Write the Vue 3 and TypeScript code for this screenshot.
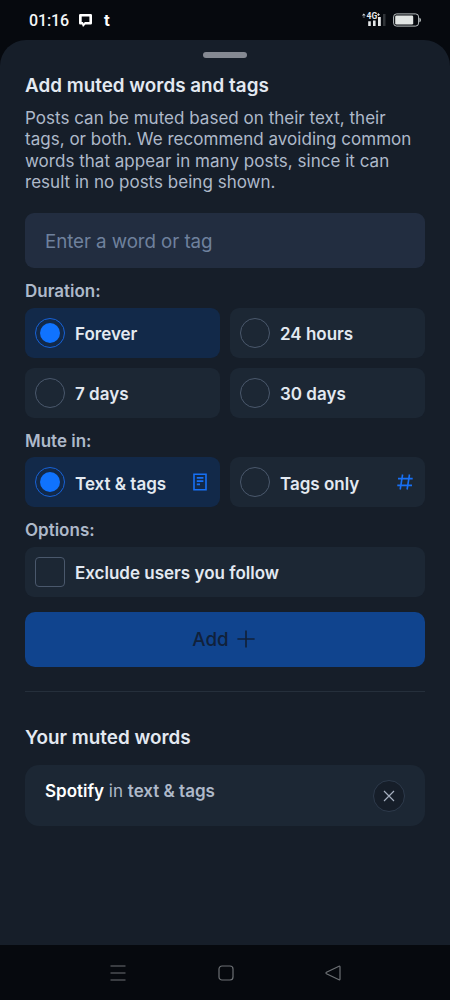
<script setup lang="ts">
import { ref } from 'vue'

interface Choice {
  id: string
  label: string
  icon?: 'page' | 'hash'
}

const durations: Choice[] = [
  { id: 'forever', label: 'Forever' },
  { id: 'day', label: '24 hours' },
  { id: 'week', label: '7 days' },
  { id: 'month', label: '30 days' },
]
const targets: Choice[] = [
  { id: 'content', label: 'Text & tags', icon: 'page' },
  { id: 'tag', label: 'Tags only', icon: 'hash' },
]
const intro: string[] = [
  'Posts can be muted based on their text, their',
  'tags, or both. We recommend avoiding common',
  'words that appear in many posts, since it can',
  'result in no posts being shown.',
]

const duration = ref('forever')
const target = ref('content')
const excludeFollowing = ref(false)
const word = ref('')
</script>

<template>
  <div class="screen">
    <header class="status">
      <span class="clock">01:16</span>
      <svg class="chat" width="13" height="13" viewBox="0 0 13 13">
        <path fill="#fff" fill-rule="evenodd" d="M1.3 0H11.7Q13 0 13 1.3V9.2Q13 10.5 11.7 10.5H6.4L4 13L3 10.5H1.3Q0 10.5 0 9.2V1.3Q0 0 1.3 0ZM2.7 2.6V8H4.2V9.4L6 8H10.4V2.6Z" />
      </svg>
      <span class="tee">t</span>
      <span class="grow"></span>
      <svg class="signal" width="28" height="16" viewBox="0 0 28 16">
        <path d="M0 3.4L1.8 1.6L3.6 3.4Z" fill="#dde1e3" />
        <path d="M.8 5H2.9" stroke="#777d82" />
        <text x="4.6" y="7.2" class="network">4G</text>
        <path d="M15.2 2.6H17.8M16.5 1.3V3.9" stroke="#e5e8e9" stroke-width=".9" />
        <path d="M6.2 9.2H8.8V14H6.2ZM11 8.4H13.6V14H11ZM16 5H18.8V14H16Z" fill="#e5e8e9" />
        <path d="M21 2H23.5V14H21Z" fill="#303438" />
      </svg>
      <svg class="battery" width="29" height="14" viewBox="0 0 29 14">
        <rect x=".6" y=".9" width="25" height="12.2" rx="3" fill="none" stroke="#b9bfc0" />
        <rect x="2.2" y="2.5" width="18" height="9" rx="1.3" fill="#e1e5e3" />
        <path d="M26.4 4.7Q28 5.2 28 7T26.4 9.3Z" fill="#b9bfc0" />
      </svg>
    </header>

    <main class="sheet">
      <div class="handle"></div>
      <h1 class="title">Add muted words and tags</h1>
      <p class="intro">
        <span v-for="line in intro" :key="line" class="line">{{ line }}</span>
      </p>
      <input v-model="word" class="field" placeholder="Enter a word or tag" />

      <h2 class="label">Duration:</h2>
      <div class="grid">
        <div
          v-for="item in durations"
          :key="item.id"
          class="option"
          :class="{ selected: duration === item.id }"
          @click="duration = item.id"
        >
          <span class="radio"></span>
          <span>{{ item.label }}</span>
        </div>
      </div>

      <h2 class="label">Mute in:</h2>
      <div class="grid">
        <div
          v-for="item in targets"
          :key="item.id"
          class="option"
          :class="{ selected: target === item.id }"
          @click="target = item.id"
        >
          <span class="radio"></span>
          <span class="option-text">{{ item.label }}</span>
          <svg v-if="item.icon === 'page'" class="icon" width="20" height="20" viewBox="0 0 20 20">
            <path d="M4 2.2H16V17.8H4ZM6.8 5.9H13.4M6.8 9.1H13.4M6.8 12.4H10" />
          </svg>
          <svg v-else class="icon" width="20" height="20" viewBox="0 0 20 20">
            <path d="M7.6 2.5L5.2 17.5M14.5 2.5L12.1 17.5M3 6.6H17.7M2.3 13.4H17" />
          </svg>
        </div>
      </div>

      <h2 class="label">Options:</h2>
      <div class="option" @click="excludeFollowing = !excludeFollowing">
        <span class="check" :class="{ ticked: excludeFollowing }"></span>
        <span>Exclude users you follow</span>
      </div>

      <button class="add">
        <span>Add</span>
        <svg width="18" height="18" viewBox="0 0 18 18">
          <path d="M9 .4V17.6M.4 9H17.6" stroke="#11213a" stroke-width="1.7" />
        </svg>
      </button>
      <hr class="divider" />

      <h1 class="title muted-title">Your muted words</h1>
      <div class="muted">
        <p class="muted-text"><b>Spotify</b> in <strong>text &amp; tags</strong></p>
        <button class="remove" aria-label="Remove">
          <svg width="12" height="12" viewBox="0 0 12 12">
            <path d="M1 1L11 11M11 1L1 11" stroke="#a5afbf" stroke-width="1.2" />
          </svg>
        </button>
      </div>
    </main>

    <nav class="nav">
      <svg width="16" height="16" viewBox="0 0 16 16"><path d="M.5 1H15.5M.5 8H15.5M.5 15H15.5" /></svg>
      <svg width="16" height="16" viewBox="0 0 16 16"><rect x="1" y="1" width="14" height="14" rx="3" /></svg>
      <svg width="16" height="16" viewBox="0 0 16 16"><path d="M14 1.2Q15 .8 15 2V14Q15 15.2 14 14.8L1.5 8.8Q.5 8 1.5 7.2Z" /></svg>
    </nav>
  </div>
</template>

<style>
body {
  margin: 0;
  background: #06090e;
}
</style>

<style scoped>
.screen {
  width: 450px;
  height: 1000px;
  display: flex;
  flex-direction: column;
  overflow: hidden;
  background: #06090e;
  font-family: Inter, "Liberation Sans", sans-serif;
  color: #e3e9f1;
}
.screen * {
  box-sizing: border-box;
}
.status {
  height: 40px;
  flex: none;
  display: flex;
  align-items: center;
  padding: 0 28px 0 29px;
}
.clock {
  width: 50px;
  padding-top: 1px;
  font: 500 16px/20px Roboto, sans-serif;
  letter-spacing: -0.1px;
  color: #f4f6f7;
}
.tee {
  margin-left: 12px;
  font: 700 16px/20px Inter, sans-serif;
  color: #fff;
}
.grow {
  flex: 1;
}
.signal {
  margin-right: 3px;
}
.network {
  font: 700 8.5px Roboto, sans-serif;
  fill: #e5e8e9;
}
.sheet {
  height: 905px;
  flex: none;
  display: flex;
  flex-direction: column;
  padding: 12px 25px 0;
  border-radius: 26px 26px 0 0;
  background: #161e29;
}
.handle {
  width: 44px;
  height: 6px;
  flex: none;
  align-self: center;
  border-radius: 3px;
  background: #858992;
}
.title {
  height: 24px;
  margin: 15px 0 11px;
  padding-top: 1px;
  font-size: 18.85px;
  font-weight: 600;
  line-height: 24px;
  white-space: nowrap;
}
.intro {
  margin: 0 0 20px;
  font-size: 17px;
  line-height: 21.33px;
  letter-spacing: 0.02px;
  color: #aeb9c9;
}
.line {
  display: block;
  white-space: nowrap;
}
.field {
  width: 100%;
  height: 55px;
  flex: none;
  padding: 1px 20px 0;
  border: 0;
  border-radius: 9px;
  outline: 0;
  background: #222d40;
  font: 400 18.75px Inter, sans-serif;
  letter-spacing: -0.08px;
  color: #e3e9f1;
}
.field::placeholder {
  color: #6f819d;
  opacity: 1;
}
.label {
  height: 20px;
  margin: 13px 0 6.5px;
  font-size: 17px;
  font-weight: 600;
  line-height: 20px;
  color: #aeb9c9;
}
.grid {
  display: grid;
  grid-template-columns: 1fr 1fr;
  gap: 10px;
}
.option {
  height: 50px;
  flex: none;
  display: flex;
  align-items: center;
  gap: 10px;
  padding: 0 10px;
  border-radius: 9px;
  background: #1c2734;
  font-size: 17px;
  font-weight: 600;
  line-height: 20px;
  white-space: nowrap;
}
.option.selected {
  background: #122949;
}
.option > span:nth-child(2) {
  padding-top: 3px;
}
.option-text {
  flex: 1;
}
.radio {
  width: 30px;
  height: 30px;
  flex: none;
  padding: 4px;
  border: 1px solid #4a586c;
  border-radius: 50%;
}
.selected .radio {
  border-color: #1762d7;
}
.selected .radio::before {
  content: "";
  display: block;
  width: 20px;
  height: 20px;
  border-radius: 50%;
  background: #1073fe;
}
.icon {
  fill: none;
  stroke: #1770f5;
  stroke-width: 1.6;
}
.check {
  width: 30px;
  height: 30px;
  flex: none;
  border: 1px solid #4a586c;
  border-radius: 4px;
}
.check.ticked {
  background: #1073fe;
}
.add {
  height: 55px;
  flex: none;
  display: flex;
  align-items: center;
  justify-content: center;
  gap: 8px;
  margin: 15px 0 0;
  padding: 0 3px 0 0;
  border: 0;
  border-radius: 10px;
  background: #10448e;
  font: 500 18.75px/24px Inter, sans-serif;
  color: #11213a;
}
.add span {
  padding-top: 2px;
}
.divider {
  width: 100%;
  height: 1px;
  flex: none;
  margin: 24.5px 0 0;
  border: 0;
  background: #252f3b;
}
.muted-title {
  margin: 33px 0 16px;
}
.muted {
  height: 61px;
  flex: none;
  display: flex;
  justify-content: space-between;
  padding: 15px 20px;
  border-radius: 14px;
  background: #1c2734;
}
.muted-text {
  margin: 1px 0 0;
  font-size: 17px;
  line-height: 21px;
  color: #aeb9c9;
}
.muted-text b {
  font-weight: 600;
  color: #fff;
}
.muted-text strong {
  font-weight: 600;
}
.remove {
  width: 32px;
  height: 32px;
  display: flex;
  align-items: center;
  justify-content: center;
  padding: 0;
  border: 1px solid #2d3a4b;
  border-radius: 50%;
  background: #161e29;
}
.nav {
  height: 55px;
  flex: none;
  display: flex;
  align-items: center;
  justify-content: space-between;
  padding: 0 109px 0 110px;
}
.nav svg {
  fill: none;
  stroke: #6c7074;
  stroke-width: 1.2;
}
</style>
